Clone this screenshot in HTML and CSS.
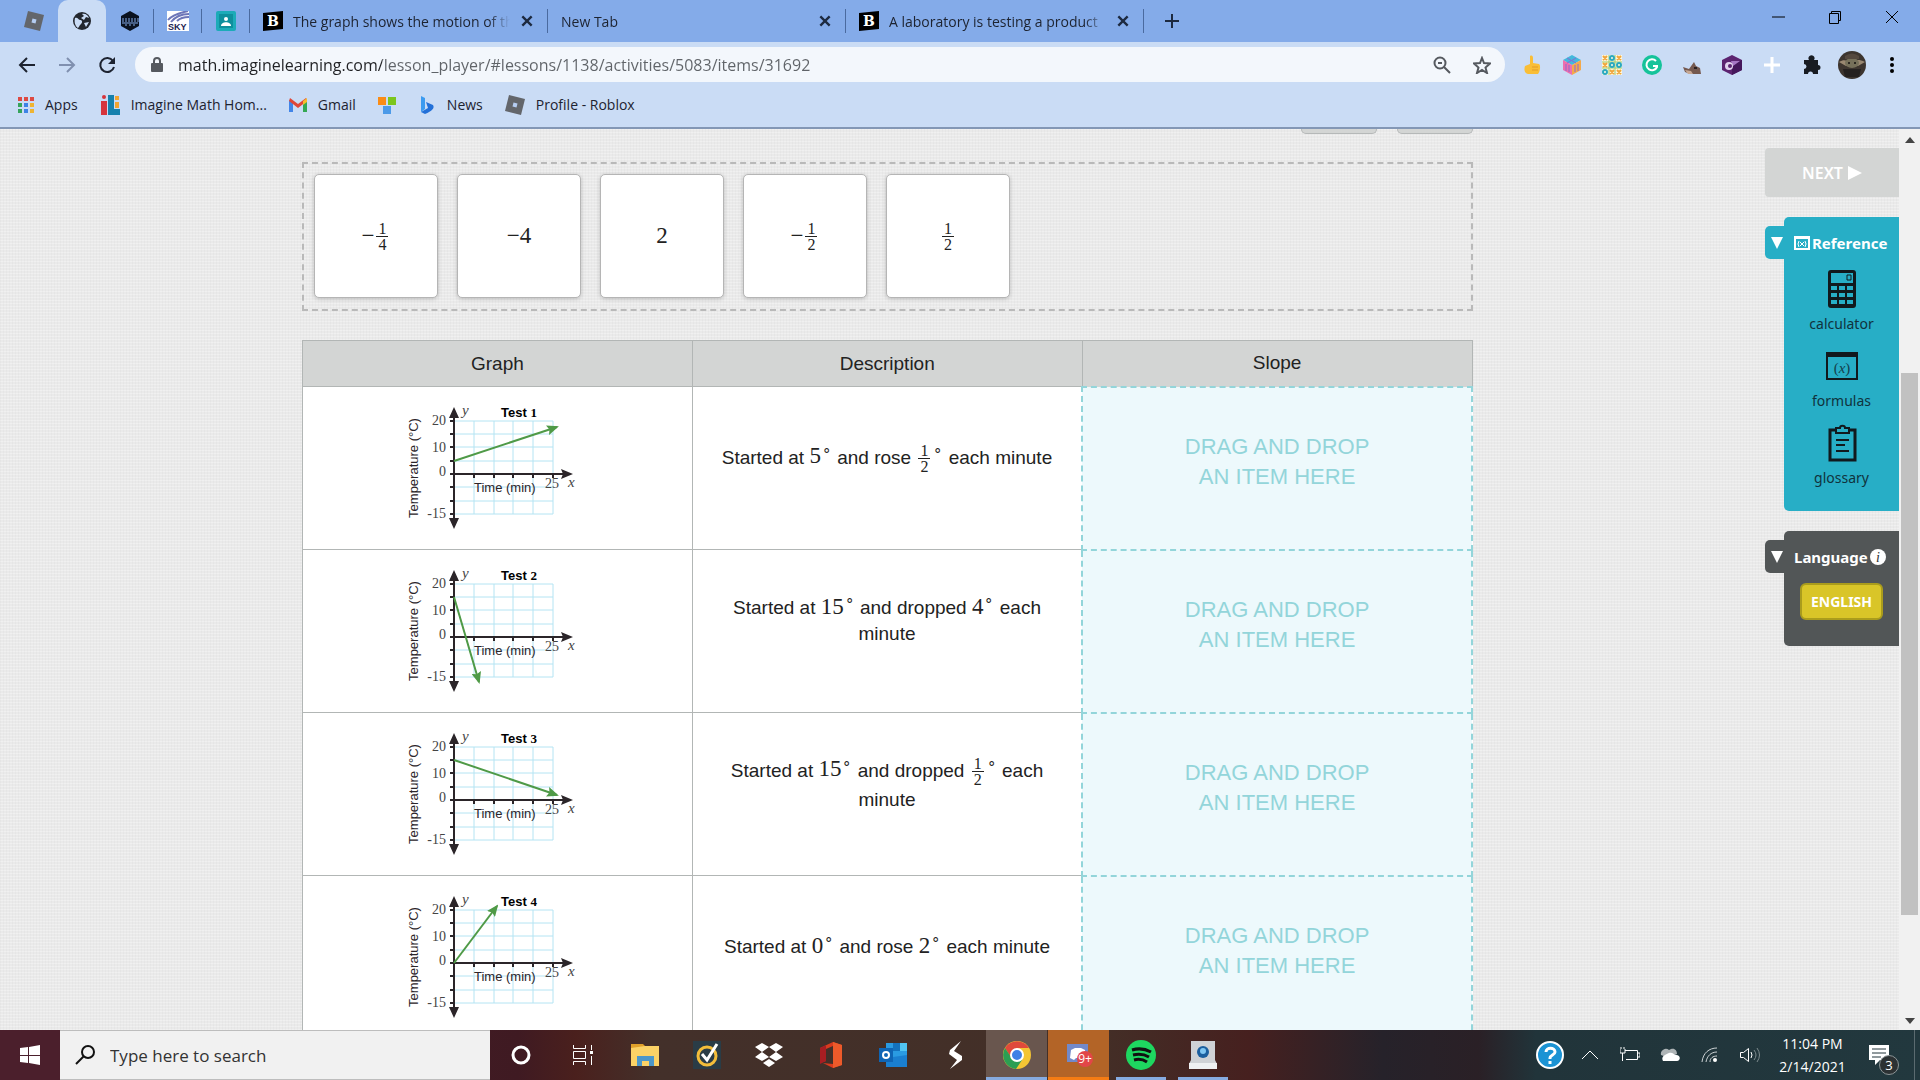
FILE: index.html
```html
<!DOCTYPE html>
<html lang="en">
  <head>
    <meta charset="UTF-8" />
    <meta name="viewport" content="width=device-width, initial-scale=1.0" />
    <title>Imagine Math</title>
    <link rel="stylesheet" href="styles.css" />
  </head>
  <body>
    <!-- shared drawings -->
    <svg class="defs" aria-hidden="true">
      <symbol id="roblox" viewBox="0 0 20 20">
        <path d="M4 0l16 4-4 16L0 16z" fill="#63666b" />
        <path d="M8.500 7.500l4 1-1 4-4-1z" fill="#b5cdf2" />
      </symbol>
      <symbol id="close" viewBox="0 0 12 12">
        <path d="M2 2l8 8M10 2l-8 8" stroke="#1d2a40" stroke-width="2" />
      </symbol>
      <symbol id="plot" viewBox="0 0 180 130">
        <path
          d="M67 18v93M87 18v93M106 18v93M126 18v93M146 18v93M47 18h99M47 31h99M47 44h99M47 58h99M47 84h99M47 98h99M47 111h99"
          stroke="#b4e4f3"
          fill="none"
        />
        <path d="M47 10v110M47 71h112" stroke="#2b2529" stroke-width="2" />
        <path
          d="M43 18h4M43 31h4M43 44h4M43 58h4M43 71h4M43 84h4M43 98h4M43 111h4M67 71v4M87 71v4M106 71v4M126 71v4M146 71v4"
          stroke="#2b2529"
          stroke-width="2"
        />
        <path d="M47 4l5 11h-10zM47 126l5-11h-10zM166 71l-12-5 2 5-2 5z" fill="#2b2529" />
      </symbol>
      <marker id="arrow" viewBox="0 0 12 10" refX="10" refY="5" markerWidth="12" markerHeight="10" markerUnits="userSpaceOnUse" orient="auto">
        <path d="M0 0l12 5-12 5 2-5z" fill="#4f9a47" />
      </marker>
    </svg>

    <header class="browser">
      <nav class="tabs">
        <button class="tab pinned" aria-label="Roblox"><svg class="icon20"><use href="#roblox" /></svg></button>
        <button class="tab pinned active" aria-label="Imagine Math">
          <svg class="icon20" viewBox="0 0 20 20">
            <circle cx="10" cy="10" r="9" fill="#23272e" />
            <path d="M3 7c3-1 3 2 5 2s3 2 1 4-2 3-3 4C3 15 2 11 3 7zM10 3c3-1 6 1 7 4l-3-1-2 3-3-2 3-2zM12 12l5-1-3 5z" fill="#cadcf5" />
          </svg>
        </button>
        <button class="tab pinned" aria-label="Dare">
          <svg class="icon20" viewBox="0 0 20 20">
            <path d="M10 0l9 5v10l-9 5-9-5V5z" fill="#0a1220" />
            <path d="M3 7v4M6 7v4M9 7v4M12 7v4M15 7v4M18 7v4M5 14h2M9 14h2M13 14h2M2 12h16" stroke="#84abe9" />
          </svg>
        </button>
        <button class="tab pinned" aria-label="Sky">
          <svg class="icon22" viewBox="0 0 22 20">
            <path d="M0 0h22v20H0z" fill="#fff" />
            <path d="M1 9C5 4 12 2 21 0M4 11C8 6 15 3 22 3M10 10c3-3 7-4 12-4" stroke="#6d76b8" stroke-width="2" fill="none" />
            <text x="1" y="19" font-family="Liberation Sans, sans-serif" font-size="9" font-weight="bold" fill="#1b2350">SKY</text>
          </svg>
        </button>
        <button class="tab pinned" aria-label="Classroom">
          <svg class="icon20" viewBox="0 0 20 20">
            <rect width="20" height="20" rx="2" fill="#1cabb8" />
            <rect x="3" y="3" width="14" height="14" fill="#0f8f9d" />
            <circle cx="10" cy="8" r="2" fill="#fff" />
            <path d="M5 15c0-5 10-5 10 0z" fill="#fff" />
          </svg>
        </button>
        <div class="tab">
          <span class="brainly">B</span>
          <span class="tab-title">The graph shows the motion of the</span>
          <button aria-label="Close tab"><svg class="icon14"><use href="#close" /></svg></button>
        </div>
        <div class="tab">
          <span class="tab-title">New Tab</span>
          <button aria-label="Close tab"><svg class="icon14"><use href="#close" /></svg></button>
        </div>
        <div class="tab">
          <span class="brainly">B</span>
          <span class="tab-title">A laboratory is testing a product</span>
          <button aria-label="Close tab"><svg class="icon14"><use href="#close" /></svg></button>
        </div>
        <button class="new-tab" aria-label="New tab">
          <svg class="icon16" viewBox="0 0 16 16"><path d="M8 1v14M1 8h14" stroke="#1d2a40" stroke-width="2" /></svg>
        </button>
        <div class="window-buttons">
          <button aria-label="Minimize"><svg class="icon14" viewBox="0 0 14 14"><path d="M1 7h13" stroke="#000" /></svg></button>
          <button aria-label="Restore"><svg class="icon14" viewBox="0 0 14 14"><path d="M1.500 3.500h9v10h-9zM3.500 3V1.500h9v9H11" stroke="#000" fill="none" /></svg></button>
          <button aria-label="Close"><svg class="icon14" viewBox="0 0 14 14"><path d="M1 1l12 12M13 1L1 13" stroke="#000" /></svg></button>
        </div>
      </nav>

      <div class="toolbar">
        <div class="nav-buttons">
          <button aria-label="Back"><svg class="icon18" viewBox="0 0 18 18"><path d="M17 9H2M9 2L2 9l7 7" stroke="#1d2330" stroke-width="2" fill="none" /></svg></button>
          <button aria-label="Forward"><svg class="icon18" viewBox="0 0 18 18"><path d="M1 9h15M9 2l7 7-7 7" stroke="#8090af" stroke-width="2" fill="none" /></svg></button>
          <button aria-label="Reload">
            <svg class="icon18" viewBox="0 0 18 18">
              <path d="M15 5a7 7 0 1 0 1 6" stroke="#1d2330" stroke-width="2" fill="none" />
              <path d="M17 1v7h-7z" fill="#1d2330" />
            </svg>
          </button>
        </div>
        <div class="omnibox">
          <svg class="lock" viewBox="0 0 12 16">
            <path d="M3 7V4a3 3 0 0 1 6 0v3" stroke="#55595f" stroke-width="2" fill="none" />
            <rect y="6" width="12" height="9" rx="1" fill="#55595f" />
          </svg>
          <input class="url" type="text" aria-label="Address" value="math.imaginelearning.com/lesson_player/#lessons/1138/activities/5083/items/31692" />
          <button aria-label="Zoom">
            <svg class="icon18" viewBox="0 0 18 18"><circle cx="7" cy="7" r="5.500" stroke="#55595f" stroke-width="2" fill="none" /><path d="M5 7h4M11 11l6 6" stroke="#55595f" stroke-width="2" /></svg>
          </button>
          <button aria-label="Bookmark this tab">
            <svg class="icon18" viewBox="0 0 18 18"><path d="M9 2l2 5 6 .5-4.500 4L14 17l-5-3-5 3 1.500-5.500L1 7.500 7 7z" stroke="#55595f" stroke-width="2" fill="none" /></svg>
          </button>
        </div>
        <div class="extensions">
          <button aria-label="Thumb">
            <svg class="icon20" viewBox="0 0 20 20"><path d="M8 1c2-1 3 0 3 2v5l6 1c2 1 1 8-1 10H6c-4-1-4-5-3-8l5-2z" fill="#f9be36" /><path d="M10 12h6M10 15h6" stroke="#e29b27" /></svg>
          </button>
          <button aria-label="Cube">
            <svg class="icon20" viewBox="0 0 20 20">
              <path d="M10 0l9 5-9 5-9-5z" fill="#42b9dc" /><path d="M1 5l9 5v10l-9-5z" fill="#ed6fae" /><path d="M19 5l-9 5v10l9-5z" fill="#f4a94a" />
              <path d="M5 3l9 5M14 3L5 8M4 9v7M7 10v7M13 10v7M16 9v7" stroke="#8a6ad0" />
            </svg>
          </button>
          <button aria-label="Tic tac toe">
            <svg class="icon20" viewBox="0 0 20 20">
              <path d="M0 0h20v20H0z" fill="#fdf8df" /><path d="M7 0v20M13 0v20M0 7h20M0 13h20" stroke="#9bcb6c" />
              <path d="M1 1l4 4M5 1L1 5M15 1l4 4M19 1l-4 4M1 8l4 4M5 8l-4 4M8 15l4 4M12 15l-4 4M15 15l4 4M19 15l-4 4" stroke="#f0a63c" stroke-width="2" />
              <circle cx="10" cy="3" r="2" stroke="#2aa9c0" stroke-width="2" fill="none" /><circle cx="10" cy="10" r="2" stroke="#2aa9c0" stroke-width="2" fill="none" />
              <circle cx="17" cy="10" r="2" stroke="#2aa9c0" stroke-width="2" fill="none" /><circle cx="3" cy="17" r="2" stroke="#2aa9c0" stroke-width="2" fill="none" />
            </svg>
          </button>
          <button aria-label="Grammarly">
            <svg class="icon20" viewBox="0 0 20 20"><circle cx="10" cy="10" r="10" fill="#15c39a" /><path d="M14 6a5.500 5.500 0 1 0 1 6v-1h-4" stroke="#fff" stroke-width="2" fill="none" /></svg>
          </button>
          <button aria-label="Wolf">
            <svg class="icon20" viewBox="0 0 20 20"><path d="M1 12l6 2 5-7 2 4 4 2 1 6H8l-5-2z" fill="#75594f" /><path d="M3 15l6 1 2 3H6z" fill="#c7a995" /><path d="M12 12h3v2h-3z" fill="#2a2020" /></svg>
          </button>
          <button aria-label="Purple cube">
            <svg class="icon20" viewBox="0 0 20 20"><path d="M10 0l10 5v10l-10 5L0 15V5z" fill="#5c2470" /><path d="M10 9l10-4v10l-10 5z" fill="#45175b" /><path d="M9 6h9l-7 5z" fill="#a777c4" /><circle cx="7" cy="11" r="4" fill="#e2d2ee" /><circle cx="8" cy="11" r="2" fill="#5c2470" /></svg>
          </button>
          <button aria-label="Add"><svg class="icon20" viewBox="0 0 20 20"><path d="M10 2v16M2 10h16" stroke="#fff" stroke-width="3" /></svg></button>
          <button aria-label="Extensions">
            <svg class="icon20" viewBox="0 0 20 20"><path d="M2 5h5a3 3 0 1 1 5 0h4v5a2.500 2.500 0 1 1 0 5v4h-5a2.500 2.500 0 0 0-5 0H2v-5a2.500 2.500 0 0 0 0-5z" fill="#181c22" /></svg>
          </button>
          <button aria-label="Profile">
            <svg class="icon28" viewBox="0 0 28 28">
              <circle cx="14" cy="14" r="14" fill="#3d352f" /><path d="M1 11c6-4 8 0 13-1s7-2 13 1l-7 4H8z" fill="#9a8871" />
              <ellipse cx="14" cy="12" rx="7" ry="5" fill="#76705a" /><circle cx="11" cy="12" r="1" fill="#15110f" /><circle cx="17" cy="12" r="1" fill="#15110f" /><path d="M5 18h18l-2 8H7z" fill="#252120" /><path d="M7 5q7-5 14 0v3H7z" fill="#54483e" />
            </svg>
          </button>
          <button aria-label="Menu"><svg class="icon18" viewBox="0 0 18 18"><circle cx="9" cy="3" r="2" /><circle cx="9" cy="9" r="2" /><circle cx="9" cy="15" r="2" /></svg></button>
        </div>
      </div>

      <nav class="bookmarks">
        <a href="#">
          <svg class="icon16" viewBox="0 0 16 16">
            <path d="M0 0h4v4H0zM6 0h4v4H6zM12 0h4v4h-4z" fill="#dd4a42" />
            <path d="M0 6h4v4H0z" fill="#36a45c" /><path d="M6 6h4v4H6zM6 12h4v4H6z" fill="#3d83e6" />
            <path d="M12 6h4v4h-4zM12 12h4v4h-4z" fill="#efb431" /><path d="M0 12h4v4H0z" fill="#36a45c" />
          </svg>
          <span>Apps</span>
        </a>
        <a href="#">
          <svg class="icon20" viewBox="0 0 20 20">
            <circle cx="4" cy="2" r="2" fill="#d6343c" /><path d="M1 6h6v14H1z" fill="#d6343c" /><path d="M8 0h6v14h6v6H8z" fill="#1681ad" /><path d="M15 1h4v4h-4zM15 7h4v6h-4z" fill="#f2a531" />
          </svg>
          <span>Imagine Math Hom...</span>
        </a>
        <a href="#">
          <svg class="icon18" viewBox="0 0 18 18">
            <path d="M0 4l4 3v9H0z" fill="#4285e8" /><path d="M18 4l-4 3v9h4z" fill="#34a853" /><path d="M1 2l8 6 8-6 1 3-9 7-9-7z" fill="#e04638" /><path d="M14 5l4-3v4l-4 3z" fill="#f7bb2c" />
          </svg>
          <span>Gmail</span>
        </a>
        <a href="#" aria-label="Microsoft">
          <svg class="icon18" viewBox="0 0 18 18"><path d="M0 1h8v8H0z" fill="#fa8c16" /><path d="M10 1h8v8h-8z" fill="#7cc61d" /><path d="M5 10h8v8H5z" fill="#4c9ae8" /></svg>
        </a>
        <a href="#">
          <svg class="icon18" viewBox="0 0 18 18"><path d="M3 0l4 2v11l-4 3z" fill="#3c9bf0" /><path d="M8 6l7 3c2 3-1 6-8 9l-4-2 7-4z" fill="#2370d8" /></svg>
          <span>News</span>
        </a>
        <a href="#"><svg class="icon20"><use href="#roblox" /></svg><span>Profile - Roblox</span></a>
      </nav>
    </header>

    <main class="page">
      <section class="lesson">
        <div class="lesson-tools">
          <button aria-label="Clear"></button>
          <button aria-label="Undo"></button>
        </div>

        <div class="answers">
          <button class="answer">−<span class="fraction"><span>1</span><span>4</span></span></button>
          <button class="answer">−4</button>
          <button class="answer">2</button>
          <button class="answer">−<span class="fraction"><span>1</span><span>2</span></span></button>
          <button class="answer"><span class="fraction"><span>1</span><span>2</span></span></button>
        </div>

        <table class="tests">
          <thead>
            <tr>
              <th>Graph</th>
              <th>Description</th>
              <th>Slope</th>
            </tr>
          </thead>
          <tbody>
            <tr>
              <td>
                <svg class="graph" viewBox="0 0 180 130">
                  <use href="#plot" />
                  <text class="axis" text-anchor="middle" transform="translate(11 65) rotate(-90)">Temperature (°C)</text>
                  <text class="title" x="94" y="14">Test <tspan class="number">1</tspan></text>
                  <text class="axis" x="67" y="89">Time (min)</text>
                  <g class="ticks"><text x="39" y="22">20</text><text x="39" y="49">10</text><text x="39" y="73">0</text><text x="39" y="115">-15</text><text x="152" y="85">25</text></g>
                  <text class="letter" x="55" y="12">y</text><text class="letter" x="161" y="84">x</text>
                  <path class="line" d="M47 58L150 24" marker-end="url(#arrow)" />
                </svg>
              </td>
              <td class="description">Started at <span class="math">5<sup>∘</sup></span> and rose <span class="math"><span class="fraction"><span>1</span><span>2</span></span><sup>∘</sup></span> each minute</td>
              <td class="drop">DRAG AND DROP<br />AN ITEM HERE</td>
            </tr>
            <tr>
              <td>
                <svg class="graph" viewBox="0 0 180 130">
                  <use href="#plot" />
                  <text class="axis" text-anchor="middle" transform="translate(11 65) rotate(-90)">Temperature (°C)</text>
                  <text class="title" x="94" y="14">Test <tspan class="number">2</tspan></text>
                  <text class="axis" x="67" y="89">Time (min)</text>
                  <g class="ticks"><text x="39" y="22">20</text><text x="39" y="49">10</text><text x="39" y="73">0</text><text x="39" y="115">-15</text><text x="152" y="85">25</text></g>
                  <text class="letter" x="55" y="12">y</text><text class="letter" x="161" y="84">x</text>
                  <path class="line" d="M47 31L72 116" marker-end="url(#arrow)" />
                </svg>
              </td>
              <td class="description">Started at <span class="math">15<sup>∘</sup></span> and dropped <span class="math">4<sup>∘</sup></span> each minute</td>
              <td class="drop">DRAG AND DROP<br />AN ITEM HERE</td>
            </tr>
            <tr>
              <td>
                <svg class="graph" viewBox="0 0 180 130">
                  <use href="#plot" />
                  <text class="axis" text-anchor="middle" transform="translate(11 65) rotate(-90)">Temperature (°C)</text>
                  <text class="title" x="94" y="14">Test <tspan class="number">3</tspan></text>
                  <text class="axis" x="67" y="89">Time (min)</text>
                  <g class="ticks"><text x="39" y="22">20</text><text x="39" y="49">10</text><text x="39" y="73">0</text><text x="39" y="115">-15</text><text x="152" y="85">25</text></g>
                  <text class="letter" x="55" y="12">y</text><text class="letter" x="161" y="84">x</text>
                  <path class="line" d="M47 31L150 66" marker-end="url(#arrow)" />
                </svg>
              </td>
              <td class="description">Started at <span class="math">15<sup>∘</sup></span> and dropped <span class="math"><span class="fraction"><span>1</span><span>2</span></span><sup>∘</sup></span> each minute</td>
              <td class="drop">DRAG AND DROP<br />AN ITEM HERE</td>
            </tr>
            <tr>
              <td>
                <svg class="graph" viewBox="0 0 180 130">
                  <use href="#plot" />
                  <text class="axis" text-anchor="middle" transform="translate(11 65) rotate(-90)">Temperature (°C)</text>
                  <text class="title" x="94" y="14">Test <tspan class="number">4</tspan></text>
                  <text class="axis" x="67" y="89">Time (min)</text>
                  <g class="ticks"><text x="39" y="22">20</text><text x="39" y="49">10</text><text x="39" y="73">0</text><text x="39" y="115">-15</text><text x="152" y="85">25</text></g>
                  <text class="letter" x="55" y="12">y</text><text class="letter" x="161" y="84">x</text>
                  <path class="line" d="M47 71L90 14" marker-end="url(#arrow)" />
                </svg>
              </td>
              <td class="description">Started at <span class="math">0<sup>∘</sup></span> and rose <span class="math">2<sup>∘</sup></span> each minute</td>
              <td class="drop">DRAG AND DROP<br />AN ITEM HERE</td>
            </tr>
          </tbody>
        </table>
      </section>

      <aside class="side">
        <button class="next" disabled>NEXT <svg class="icon14" viewBox="0 0 14 14"><path d="M0 0l14 7-14 7z" fill="#fff" /></svg></button>

        <section class="panel reference">
          <div class="panel-head">
            <button class="toggle" aria-label="Toggle reference"><svg class="triangle" viewBox="0 0 12 12"><path d="M0 0h12L6 12z" fill="#fff" /></svg></button>
            <svg class="icon16" viewBox="0 0 16 14"><path d="M1 1h14v12H1zM1 2h14" stroke="#fff" stroke-width="2" fill="none" /><path d="M5 5q-2 3 0 6M11 5q2 3 0 6M6 6l4 4M10 6l-4 4" stroke="#fff" fill="none" /></svg>
            <h2>Reference</h2>
          </div>
          <a class="tool" href="#">
            <svg class="tool-icon" viewBox="0 0 40 40">
              <rect x="6" y="1" width="28" height="38" rx="3" fill="#11191d" />
              <path d="M9 4h22v10H9zM9 17h6v4H9zM17 17h6v4h-6zM25 17h6v4h-6zM9 24h6v4H9zM17 24h6v4h-6zM25 24h6v4h-6zM9 31h6v4H9zM17 31h6v4h-6zM25 31h6v4h-6z" fill="#27aec6" />
              <path d="M25 6h4v5h-4z" stroke="#11191d" fill="none" />
            </svg>
            calculator
          </a>
          <a class="tool" href="#">
            <svg class="tool-icon" viewBox="0 0 40 40">
              <path d="M5 7h30v26H5z" stroke="#11191d" stroke-width="2" fill="none" /><path d="M4 6h32v5H4z" fill="#11191d" />
              <text x="20" y="27" text-anchor="middle" font-family="Liberation Serif, serif" font-size="15" fill="#14404d">(<tspan font-style="italic">x</tspan>)</text>
            </svg>
            formulas
          </a>
          <a class="tool" href="#">
            <svg class="tool-icon" viewBox="0 0 40 40">
              <path d="M14 7H8v30h25V7h-6" stroke="#11191d" stroke-width="3" fill="none" />
              <path d="M14 5h4c0-3 5-3 5 0h4v5H14z" stroke="#11191d" stroke-width="2" fill="none" />
              <path d="M14 17h13M14 22h9M14 28h13" stroke="#11191d" stroke-width="2" />
            </svg>
            glossary
          </a>
        </section>

        <section class="panel language">
          <div class="panel-head">
            <button class="toggle" aria-label="Toggle language"><svg class="triangle" viewBox="0 0 12 12"><path d="M0 0h12L6 12z" fill="#fff" /></svg></button>
            <h2>Language</h2>
            <svg class="icon16" viewBox="0 0 16 16"><circle cx="8" cy="8" r="8" fill="#fff" /><text x="8" y="13" text-anchor="middle" font-family="Liberation Serif, serif" font-size="14" font-style="italic" fill="#333">i</text></svg>
          </div>
          <button class="english">ENGLISH</button>
        </section>
      </aside>

      <div class="scrollbar">
        <svg class="scroll-arrow" viewBox="0 0 10 6"><path d="M0 6l5-6 5 6z" fill="#444" /></svg>
        <div class="track"><div class="thumb"></div></div>
        <svg class="scroll-arrow" viewBox="0 0 10 6"><path d="M0 0l5 6 5-6z" fill="#444" /></svg>
      </div>
    </main>

    <footer class="taskbar">
      <button class="start" aria-label="Start">
        <svg class="icon20" viewBox="0 0 20 20"><path d="M0 3l8-1v8H0zM9 2l11-2v10H9zM0 11h8v7l-8-1zM9 11h11v9L9 18z" fill="#fff" /></svg>
      </button>
      <label class="search">
        <svg class="icon20" viewBox="0 0 20 20"><circle cx="13" cy="7" r="6" stroke="#111" stroke-width="2" fill="none" /><path d="M9 11l-8 8" stroke="#111" stroke-width="2" /></svg>
        <input type="text" placeholder="Type here to search" aria-label="Type here to search" />
      </label>
      <div class="apps">
        <button aria-label="Cortana"><svg class="icon20" viewBox="0 0 20 20"><circle cx="10" cy="10" r="8" stroke="#fff" stroke-width="3" fill="none" /></svg></button>
        <button aria-label="Task view"><svg class="icon20" viewBox="0 0 20 20"><path d="M.5 0v3.500h12V0M.5 20v-3.500h12V20M.5 6.500h12v7H.5zM18.500 0v5M18.500 11v9" stroke="#fff" fill="none" /><path d="M17 6h3v3h-3z" fill="#fff" /></svg></button>
        <button aria-label="File Explorer"><svg class="icon28" viewBox="0 0 28 28"><path d="M0 3h12l2 2v4H0z" fill="#e0a02a" /><path d="M0 7l14-2h14v20H0z" fill="#fbd266" /><path d="M6 25V15h17v10h-5v-5h-7v5z" fill="#4c97c9" /></svg></button>
        <button aria-label="Norton"><svg class="icon28" viewBox="0 0 28 28"><path d="M0 0h28v28H0z" fill="#2a3c46" /><circle cx="14" cy="15" r="9" stroke="#f3bd3a" stroke-width="3" fill="none" /><path d="M9 13l5 6L24 3" stroke="#fff" stroke-width="3" fill="none" /></svg></button>
        <button aria-label="Dropbox"><svg class="icon28" viewBox="0 0 28 28"><path d="M7 2l7 4-7 5-7-5zM21 2l7 4-7 5-7-5zM7 11l7 5-7 4-7-4zM21 11l7 5-7 4-7-4zM14 18l6 4-6 4-6-4z" fill="#fff" /></svg></button>
        <button aria-label="Office"><svg class="icon28" viewBox="0 0 28 28"><path d="M3 7l13-6 9 3v20l-9 3-10-5 10 1V5L9 8v12l-6 2z" fill="#d83b1e" /><path d="M16 1l9 3v20l-9 3z" fill="#ed5a2a" /><path d="M3 7l6-3v16l-6 3z" fill="#a81e22" /></svg></button>
        <button aria-label="Outlook"><svg class="icon28" viewBox="0 0 28 28"><path d="M7 2h21v24H7z" fill="#2a9be2" /><path d="M14 2h7v8h-7z" fill="#1472bd" /><path d="M21 2h7v8h-7z" fill="#50c4f2" /><path d="M7 17l21-3v12H7z" fill="#1a7fd0" /><rect y="7" width="14" height="14" fill="#0f65b5" /><circle cx="7" cy="14" r="3" stroke="#fff" stroke-width="2" fill="none" /></svg></button>
        <button aria-label="Streamlabs"><svg class="icon28" viewBox="0 0 28 28"><path d="M20 0L9 9l-1 4 8 6-7 9 12-9v-4l-8-5z" fill="#fff" /></svg></button>
        <button class="app-active" aria-label="Chrome">
          <svg class="icon28" viewBox="0 0 28 28"><circle cx="14" cy="14" r="14" fill="#f4c534" /><path d="M2 7a14 14 0 0 1 24 0H14l-5 11z" fill="#df4a3b" /><path d="M2 7a14 14 0 0 0 11 21l6-9-9 0z" fill="#2c9e53" /><circle cx="14" cy="14" r="6" fill="#3f80e6" stroke="#fff" stroke-width="2" /></svg>
        </button>
        <button class="app-alert" aria-label="Discord">
          <svg class="icon28" viewBox="0 0 28 28"><path d="M2 3h21v21l-5-3H2z" fill="#7289c9" /><path d="M6 9l4-2h6l4 2 1 8-4 2-2-2h-4l-2 2-4-2z" fill="#fff" /><circle cx="20" cy="18" r="8" fill="#e24647" /><text x="20" y="22" text-anchor="middle" font-family="Open Sans, sans-serif" font-size="12" fill="#fff">9+</text></svg>
        </button>
        <button class="app-open" aria-label="Spotify">
          <svg class="icon30" viewBox="0 0 30 30"><circle cx="15" cy="15" r="15" fill="#1ed760" /><path d="M6 10q10-3 19 2M7 15q9-2 16 2M8 20q7-2 13 2" stroke="#111" stroke-width="3" fill="none" /></svg>
        </button>
        <button class="app-open" aria-label="Camera">
          <svg class="icon28" viewBox="0 0 28 28"><path d="M2 0h24v19l2 4v5H0v-5l2-4z" fill="#cfd2d6" /><path d="M0 22h28v6H0z" fill="#eef0f2" /><circle cx="14" cy="11" r="6" fill="#1c5f9f" /><circle cx="14" cy="10" r="3" fill="#7fc6f3" /></svg>
        </button>
      </div>
      <div class="tray">
        <button aria-label="Help"><svg class="icon28" viewBox="0 0 28 28"><circle cx="14" cy="14" r="13" fill="#1b93d4" stroke="#fff" stroke-width="2" /><path d="M10 11c0-5 9-5 9 0 0 3-5 3-5 6v1M14 20v3" stroke="#fff" stroke-width="3" fill="none" /></svg></button>
        <button aria-label="Hidden icons"><svg class="icon18" viewBox="0 0 18 18"><path d="M1 13l8-8 8 8" stroke="#fff" fill="none" /></svg></button>
        <button aria-label="Battery"><svg class="icon20" viewBox="0 0 20 20"><path d="M6 14.500h11.500v-9H5M18 8h2v4h-2M0 4v4h5V4M1 4V2M4 4V2M2.500 8v8" stroke="#fff" fill="none" /></svg></button>
        <button aria-label="OneDrive"><svg class="icon20" viewBox="0 0 20 20"><path d="M1 10a5 5 0 0 1 8-5c5-3 8 0 8 4l-8 4z" fill="#aeb4b6" /><path d="M3 16a4 4 0 0 1 2-6c6-4 8-2 10 0 6-1 6 6 2 6z" fill="#fff" /></svg></button>
        <button aria-label="Network"><svg class="icon20" viewBox="0 0 20 20"><path d="M2 17C3 8 9 3 17 3M6 17c1-6 5-10 11-10M10 17c0-4 3-6 7-6" stroke="#cdd3d5" fill="none" /><circle cx="15" cy="15" r="2" fill="#fff" /></svg></button>
        <button aria-label="Volume"><svg class="icon20" viewBox="0 0 20 20"><path d="M.5 7.500h3l5-4v13l-5-4h-3z" stroke="#fff" fill="none" /><path d="M11 7q2 3 0 6" stroke="#fff" fill="none" /><path d="M14 5q4 5 0 10M17 3q5 7 0 14" stroke="#7d8b8e" fill="none" /></svg></button>
        <div class="clock"><span>11:04 PM</span><span>2/14/2021</span></div>
        <button class="notifications" aria-label="Notifications">
          <svg class="icon20" viewBox="0 0 20 20"><path d="M0 0h20v15h-9l-5 5v-5H0z" fill="#fff" /><path d="M3 4h14M3 8h14M3 12h9" stroke="#22343a" /></svg>
          <span class="badge">3</span>
        </button>
      </div>
    </footer>
  </body>
</html>
```
FILE: styles.css
```css
* {
  box-sizing: border-box;
}

body {
  margin: 0;
  height: 100vh;
  display: flex;
  flex-direction: column;
  overflow: hidden;
  font-family: "Open Sans", sans-serif;
  color: #1d2330;
}

button {
  margin: 0;
  padding: 0;
  border: 0;
  background: none;
  font: inherit;
  color: inherit;
}

input {
  border: 0;
  padding: 0;
  background: none;
  font: inherit;
  outline: none;
}

a {
  color: inherit;
  text-decoration: none;
}

svg {
  display: block;
  flex: none;
}

.defs {
  position: absolute;
  width: 0;
  height: 0;
}

.icon14 { width: 14px; height: 14px; }
.icon16 { width: 16px; height: 16px; }
.icon18 { width: 18px; height: 18px; }
.icon20 { width: 20px; height: 20px; }
.icon22 { width: 22px; height: 20px; }
.icon28 { width: 28px; height: 28px; }
.icon30 { width: 30px; height: 30px; }

/* browser */
.browser {
  flex: none;
  background: #cadcf5;
  border-bottom: 2px solid #8397b5;
}

.tabs {
  display: flex;
  align-items: center;
  height: 42px;
  padding-left: 10px;
  background: #84abe9;
  font-size: 14px;
}

.tab {
  display: flex;
  align-items: center;
  gap: 10px;
  width: 298px;
  height: 24px;
  padding: 0 13px;
  border-right: 1px solid #4a6a9f;
}

.tab.pinned {
  justify-content: center;
  width: 48px;
  padding: 0;
}

.tab.pinned:nth-child(1) {
  border: 0;
}

.tab.active {
  height: 42px;
  background: #cadcf5;
  border: 0;
  border-radius: 10px 10px 0 0;
}

.tab-title {
  flex: 1;
  overflow: hidden;
  white-space: nowrap;
  mask-image: linear-gradient(to right, #000 90%, transparent);
}

.brainly {
  width: 20px;
  height: 20px;
  background: #000;
  clip-path: polygon(0 10%, 100% 0, 100% 90%, 0 100%);
  color: #fff;
  font-family: "DejaVu Serif", serif;
  font-size: 14px;
  font-weight: bold;
  line-height: 20px;
  text-align: center;
}

.new-tab {
  width: 56px;
  display: flex;
  justify-content: center;
}

.window-buttons {
  display: flex;
  height: 34px;
  margin-left: auto;
  align-self: flex-start;
}

.window-buttons button {
  width: 57px;
  display: flex;
  align-items: center;
  justify-content: center;
}

.toolbar {
  display: flex;
  align-items: center;
  height: 45px;
}

.nav-buttons {
  display: flex;
  gap: 22px;
  width: 135px;
  padding-left: 18px;
}

.omnibox {
  flex: 1;
  display: flex;
  align-items: center;
  gap: 22px;
  height: 35px;
  padding: 0 14px 0 16px;
  border-radius: 18px;
  background: #f3f7fc;
  font-size: 16px;
}

.lock {
  width: 12px;
  height: 16px;
  margin-right: -7px;
}

/* host part is darker than the path */
.url {
  flex: 1;
  color: transparent;
  background: linear-gradient(to right, #202124 204px, #5f6368 204px);
  background-clip: text;
  -webkit-background-clip: text;
}

.extensions {
  display: flex;
  padding: 0 8px 0 7px;
}

.extensions button {
  width: 40px;
  display: flex;
  align-items: center;
  justify-content: center;
}

.bookmarks {
  display: flex;
  align-items: center;
  gap: 22px;
  height: 40px;
  padding: 0 18px 5px;
  font-size: 14px;
}

.bookmarks a {
  display: flex;
  align-items: center;
  gap: 11px;
}

/* page */
.page {
  flex: 1;
  min-height: 0;
  display: flex;
  overflow: hidden;
  background-color: #eaeaea;
  background-image:
    repeating-linear-gradient(to right, rgba(0, 0, 0, 0.02) 0 1px, transparent 1px 3px),
    repeating-linear-gradient(to bottom, rgba(255, 255, 255, 0.3) 0 1px, transparent 1px 3px);
}

.lesson {
  flex: 1;
  padding: 0 292px 0 302px;
  font-family: "Liberation Sans", sans-serif;
  font-size: 19px;
  color: #222;
}

.lesson-tools {
  display: flex;
  justify-content: flex-end;
  gap: 20px;
  height: 33px;
}

.lesson-tools button {
  width: 76px;
  height: 5px;
  border: 1px solid #b5b8b8;
  border-top: 0;
  border-radius: 0 0 8px 8px;
  background: #d3d5d4;
}

.answers {
  display: flex;
  gap: 19px;
  padding: 10px 10px 11px;
  border: 2px dashed #b9b9b9;
}

.answer {
  display: flex;
  align-items: center;
  justify-content: center;
  width: 124px;
  height: 124px;
  border: 1px solid #b5b5b5;
  border-radius: 5px;
  background: #fff;
  box-shadow: 0 1px 4px rgba(0, 0, 0, 0.2);
  font-family: "Liberation Serif", serif;
  font-size: 23px;
}

.fraction {
  display: inline-flex;
  flex-direction: column;
  margin: 0 2px;
  vertical-align: middle;
  font-size: 16px;
  line-height: 15px;
  text-align: center;
}

.fraction span {
  padding: 0 2px;
}

.fraction span:first-child {
  border-bottom: 1px solid #222;
}

.tests {
  width: 100%;
  margin-top: 29px;
  table-layout: fixed;
  border-collapse: collapse;
  background: #fff;
}

.tests th {
  height: 46px;
  padding: 0;
  border: 1px solid #b2b6b5;
  background: #d3d5d4;
  font-weight: normal;
}

.tests td {
  height: 163px;
  padding: 0;
  border: 1px solid #b2b6b5;
  text-align: center;
}

.tests .description {
  padding: 0 20px 20px;
  line-height: 26px;
}

.math {
  font-family: "Liberation Serif", serif;
  font-size: 23px;
  line-height: 20px;
  white-space: nowrap;
}

.math sup {
  padding: 0 1px;
  font-size: 15px;
  line-height: 0;
}

.tests .drop {
  padding-bottom: 12px;
  border: 2px dashed #93d5da;
  background: #edf9fc;
  color: #93d5da;
  font-size: 22px;
  line-height: 30px;
}

.graph {
  width: 180px;
  height: 130px;
  margin: 0 auto;
  font-family: "Liberation Sans", sans-serif;
  font-size: 13px;
}

.axis {
  fill: #2b2529;
}

.title {
  font-weight: bold;
}

.number {
  font-family: "Liberation Serif", serif;
}

.ticks {
  font-family: "Liberation Serif", serif;
  font-size: 14px;
  fill: #444;
  text-anchor: end;
}

.letter {
  font-family: "Liberation Serif", serif;
  font-size: 15px;
  font-style: italic;
  fill: #444;
}

.line {
  stroke: #4f9a47;
  stroke-width: 2;
}

/* side panels */
.side {
  width: 134px;
  padding-top: 19px;
  font-family: "Noto Sans", sans-serif;
}

.next {
  display: flex;
  align-items: center;
  justify-content: center;
  gap: 5px;
  width: 100%;
  height: 49px;
  border-radius: 4px 0 0 4px;
  background: #d3d5d4;
  color: #fff;
  font-size: 16px;
  font-weight: 600;
}

.panel {
  margin: 20px 0 0 19px;
  padding-top: 9px;
  border-radius: 5px 0 0 5px;
}

.panel-head {
  display: flex;
  align-items: center;
  gap: 2px;
  height: 33px;
  margin: 0 0 10px -19px;
  color: #fff;
}

.panel-head h2 {
  margin: 0;
  font-size: 15px;
}

.toggle {
  display: flex;
  align-items: center;
  width: 27px;
  height: 33px;
  padding-left: 6px;
  border-radius: 5px 0 0 5px;
}

.triangle {
  width: 12px;
  height: 12px;
}

.reference {
  padding-bottom: 11px;
}

.reference,
.reference .toggle {
  background: #27aec6;
}

.language {
  padding-bottom: 26px;
}

.language,
.language .toggle {
  background: #525657;
}

.tool {
  display: flex;
  flex-direction: column;
  align-items: center;
  gap: 5px;
  margin-bottom: 12px;
  font-size: 14px;
  line-height: 20px;
  color: #10333d;
}

.tool-icon {
  width: 40px;
  height: 40px;
}

.english {
  display: block;
  width: 83px;
  height: 37px;
  margin: 0 auto;
  border: 2px solid #aa9c1c;
  border-radius: 6px;
  background: #d9c528;
  color: #fff;
  font-size: 14px;
  font-weight: bold;
}

.scrollbar {
  display: flex;
  flex-direction: column;
  align-items: center;
  width: 21px;
  padding: 8px 0 6px;
  background: #f1f1f1;
}

.scroll-arrow {
  width: 10px;
  height: 6px;
}

.track {
  flex: 1;
  width: 17px;
  padding-top: 230px;
}

.thumb {
  height: 84%;
  background: #c1c1c1;
}

/* taskbar */
.taskbar {
  flex: none;
  display: flex;
  height: 50px;
  background: linear-gradient(to right, #4b1f2c 3%, #3f1a22 27%, #4a201d 30%, #43302a 34%, #432f27 57%, #46201f 65%, #26222a 72%, #2a2026 77%, #21343a 80%, #22383e);
}

.taskbar button {
  display: flex;
  align-items: center;
  justify-content: center;
}

.start {
  width: 60px;
}

.search {
  display: flex;
  align-items: center;
  gap: 15px;
  width: 430px;
  padding-left: 15px;
  border: solid #bdbdbd;
  border-width: 1px 0;
  background: #f1f1f1;
  font-size: 17px;
}

.search input {
  flex: 1;
}

.search input::placeholder {
  color: #333;
  opacity: 1;
}

.apps {
  display: flex;
  gap: 1px;
}

.apps button {
  width: 61px;
  border-bottom: 3px solid transparent;
  padding-top: 3px;
}

.apps .app-active {
  border-color: #86abe0;
  background: #69564e;
}

.apps .app-alert {
  border-color: #f57c14;
  background: #b36427;
}

.apps .app-open {
  background: linear-gradient(#86abe0, #86abe0) bottom / 50px 3px no-repeat border-box;
}

.tray {
  display: flex;
  margin-left: auto;
  color: #fff;
}

.tray > button {
  width: 40px;
}

.clock {
  display: flex;
  flex-direction: column;
  justify-content: center;
  align-items: center;
  width: 85px;
  font-size: 14px;
  line-height: 23px;
}

.tray .notifications {
  position: relative;
  width: 60px;
  margin-right: 5px;
  padding-right: 12px;
  border-right: 1px solid #5b6b70;
}

.badge {
  position: absolute;
  right: 15px;
  bottom: 5px;
  width: 20px;
  height: 20px;
  border: 1px solid #8c9496;
  border-radius: 50%;
  background: #2c3133;
  font-size: 13px;
  line-height: 18px;
}
```
